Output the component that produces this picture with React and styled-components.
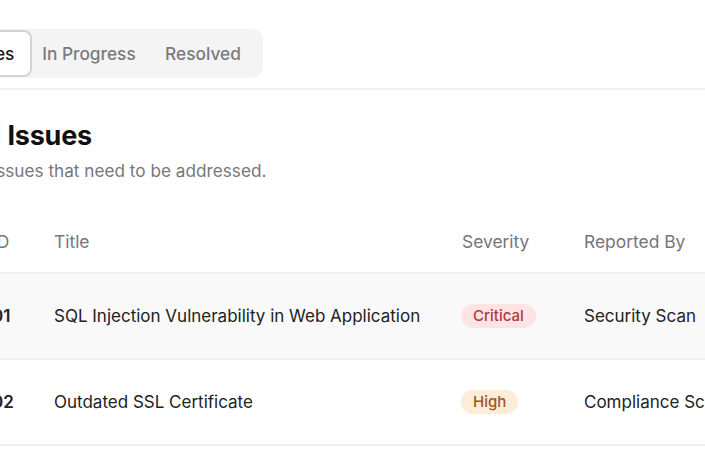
import React from "react";
import styled, { createGlobalStyle } from "styled-components";

const GlobalStyle = createGlobalStyle`
  html, body {
    margin: 0;
    padding: 0;
    background: #ffffff;
  }
  body {
    font-family: Inter, "Noto Sans", "Liberation Sans", sans-serif;
    color: #1c1c1e;
    -webkit-font-smoothing: antialiased;
  }
`;

const issues = [
  {
    id: "01",
    title: "SQL Injection Vulnerability in Web Application",
    severity: "critical",
    reporter: "Security Scan",
  },
  {
    id: "02",
    title: "Outdated SSL Certificate",
    severity: "high",
    reporter: "Compliance Scanner",
  },
  {
    id: "03",
    title: "Unpatched Server Software",
    severity: "medium",
    reporter: "Patch Audit",
  },
];

const severityLabel = {
  critical: "Critical",
  high: "High",
  medium: "Medium",
};

const App = () => {
  return (
    <Page>
      <GlobalStyle />
      <Inner>
        <TabsRow>
          <TabList>
            <Tab $active>All Issues</Tab>
            <Tab>In Progress</Tab>
            <Tab>Resolved</Tab>
          </TabList>
        </TabsRow>
        <Section>
          <Heading>All Issues</Heading>
          <Subtitle>All issues that need to be addressed.</Subtitle>
          <Table>
            <HeadRow>
              <HeadCell>ID</HeadCell>
              <HeadCell>Title</HeadCell>
              <HeadCell>Severity</HeadCell>
              <HeadCell>Reported By</HeadCell>
            </HeadRow>
            {issues.map((issue, i) => (
              <Row key={issue.id} $hover={i === 0}>
                <IdCell>{issue.id}</IdCell>
                <Cell>{issue.title}</Cell>
                <Cell>
                  <Badge $tone={issue.severity}>
                    {severityLabel[issue.severity]}
                  </Badge>
                </Cell>
                <Cell>{issue.reporter}</Cell>
              </Row>
            ))}
          </Table>
        </Section>
      </Inner>
    </Page>
  );
};

export default App;

const Page = styled.div`
  width: 705px;
  height: 472px;
  overflow: hidden;
  background: #ffffff;
`;

const Inner = styled.div`
  margin-left: -85px;
  width: 900px;
`;

const TabsRow = styled.div`
  padding: 29px 0 10px 0;
  border-bottom: 2px solid #efefef;
  width: 1000px;
`;

const TabList = styled.div`
  display: inline-grid;
  grid-template-columns: repeat(3, 114px);
  align-items: center;
  height: 49px;
  padding: 0 3px;
  box-sizing: border-box;
  background: #f4f4f5;
  border-radius: 10px;
`;

const Tab = styled.div`
  height: 47px;
  box-sizing: border-box;
  display: flex;
  align-items: center;
  justify-content: center;
  font-size: 17.3px;
  font-weight: 500;
  white-space: nowrap;
  border-radius: 8px;
  color: ${(p) => (p.$active ? "#1a1a1a" : "#7a7a7e")};
  background: ${(p) => (p.$active ? "#ffffff" : "transparent")};
  border: 2px solid ${(p) => (p.$active ? "#d4d4d6" : "transparent")};
`;

const Section = styled.div`
  padding: 29px 0 0 52px;
`;

const Heading = styled.h2`
  margin: 0;
  font-size: 27px;
  line-height: 34px;
  font-weight: 700;
  color: #111113;
  letter-spacing: -0.2px;
`;

const Subtitle = styled.p`
  margin: 6px 0 0 0;
  font-size: 17.2px;
  line-height: 24px;
  color: #77777b;
`;

const Table = styled.div`
  margin-top: 29px;
  width: 860px;
`;

const grid = `
  display: grid;
  grid-template-columns: 65px 408px 122px 1fr;
  border-bottom: 2px solid #efefef;
  & > :first-child {
    padding-left: 25px;
  }
`;

const HeadRow = styled.div`
  ${grid}
  padding: 18px 0;
`;

const Row = styled.div`
  ${grid}
  padding: 30px 0;
  align-items: center;
  background: ${(p) => (p.$hover ? "#f9f9f9" : "#ffffff")};
`;

const HeadCell = styled.div`
  padding-left: 22px;
  font-size: 17.4px;
  line-height: 24px;
  color: #75757a;
  white-space: nowrap;
`;

const Cell = styled.div`
  display: flex;
  align-items: center;
  height: 24px;
  padding-left: 22px;
  font-size: 17px;
  line-height: 24px;
  color: #222224;
  white-space: nowrap;
`;

const IdCell = styled(Cell)`
  font-weight: 600;
`;

const tones = {
  critical: { bg: "#fde3e3", fg: "#b23a3a" },
  high: { bg: "#fdecd6", fg: "#9a5527" },
  medium: { bg: "#fdf5d3", fg: "#8a6d1a" },
};

const Badge = styled.span`
  display: inline-flex;
  align-items: center;
  height: 24px;
  padding: 0 12px;
  margin-left: -1px;
  border-radius: 12px;
  font-size: 15px;
  font-weight: 500;
  background: ${(p) => tones[p.$tone].bg};
  color: ${(p) => tones[p.$tone].fg};
`;
